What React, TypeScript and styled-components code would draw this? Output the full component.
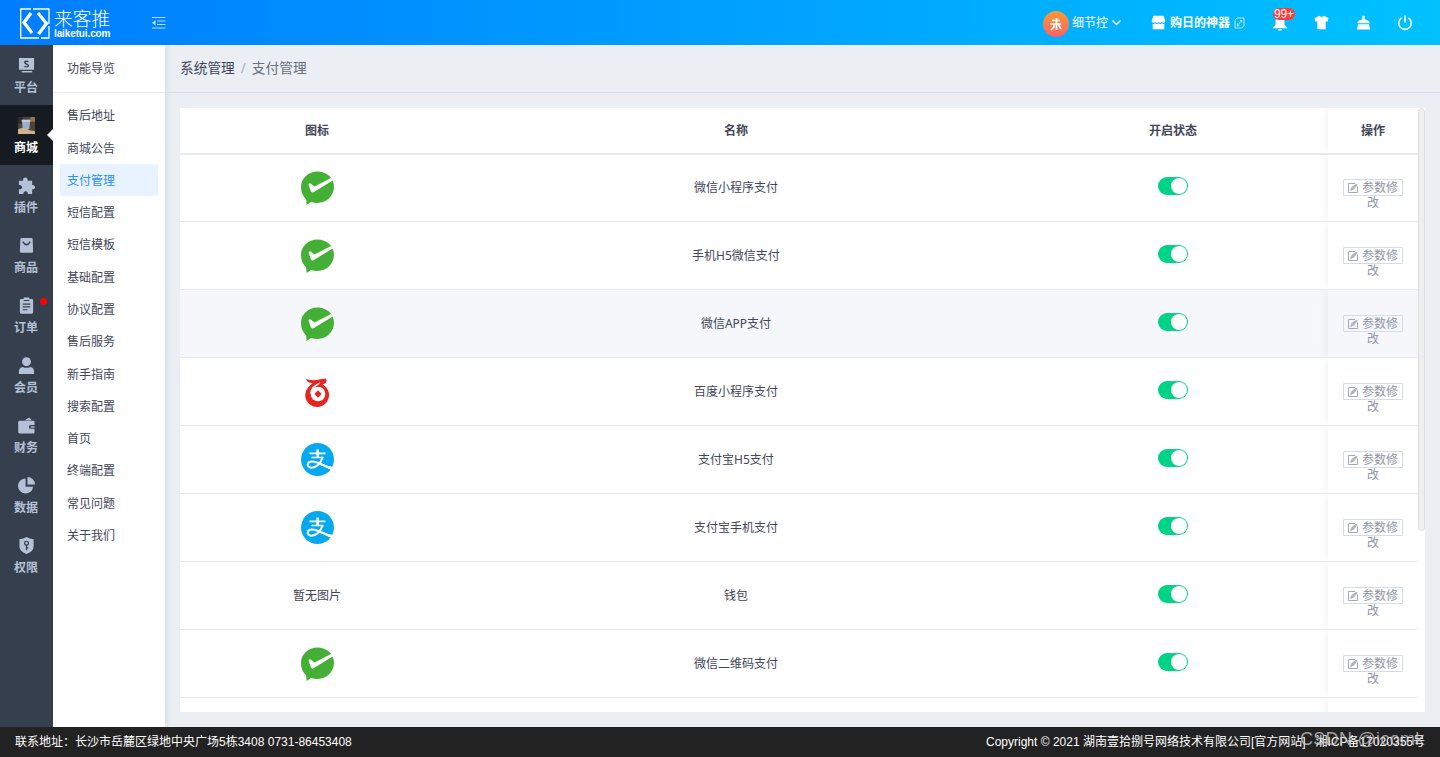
import React from 'react';
import styled, { createGlobalStyle } from 'styled-components';

const Global = createGlobalStyle`
  * { box-sizing: border-box; }
  body {
    margin: 0;
    font: 12px/16px "Noto Sans", "Noto Sans CJK SC", sans-serif;
    color: #414658;
    overflow: hidden;
  }
`;

const Page = styled.div`
  display: flex;
  flex-direction: column;
  height: 757px;
  background: #ebeff4;
`;

const Header = styled.header`
  display: flex;
  align-items: center;
  height: 45px;
  flex: none;
  padding: 0 27px 0 20px;
  color: #fff;
  background: linear-gradient(90deg, #007dff, #00c2ff);
`;
const Logo = styled.div`
  display: flex;
  gap: 4px;
  width: 132px;
  height: 31px;
  margin-top: 2px;
`;
const LogoText = styled.div`
  display: flex;
  flex-direction: column;
`;
const LogoName = styled.span`
  font-family: "Noto Sans CJK SC", sans-serif;
  font-size: 18.8px;
  font-weight: 300;
  line-height: 20px;
  height: 21px;
  white-space: nowrap;
`;
const LogoSite = styled.span`
  font: bold 10px/10px "Liberation Sans", sans-serif;
  letter-spacing: -0.12px;
`;
const Spacer = styled.div`flex: 1;`;
const User = styled.div`
  display: flex;
  align-items: center;
  gap: 3px;
  width: 108px;
`;
const Avatar = styled.span`
  display: flex;
  align-items: center;
  justify-content: center;
  width: 26px;
  height: 26px;
  margin-top: 3px;
  border-radius: 50%;
  background: linear-gradient(#f99c35, #fa6065);
`;
const Shop = styled.div`
  display: flex;
  align-items: center;
  gap: 4px;
  width: 121px;
  font-weight: bold;
`;
const Tools = styled.div`
  display: flex;
  width: 141px;
  justify-content: space-between;
`;
const Bell = styled.span`
  position: relative;
  display: flex;
`;
const Count = styled.span`
  position: absolute;
  left: 1px;
  top: -7px;
  width: 22px;
  height: 12px;
  border-radius: 6px;
  background: #ff3b3b;
  font: 12px/12px "Liberation Sans", sans-serif;
  text-align: center;
  letter-spacing: -0.2px;
`;

const Main = styled.main`
  display: flex;
  flex: 1;
  min-height: 0;
`;
const Rail = styled.nav`
  width: 53px;
  background: #363f4e;
`;
const RailItem = styled.div<{ $active?: boolean }>`
  position: relative;
  display: flex;
  flex-direction: column;
  align-items: center;
  height: 60px;
  padding: 12px 1px 0 0;
  gap: 6px;
  font-weight: bold;
  color: ${(p) => (p.$active ? '#fff' : '#b5c1d6')};
  background: ${(p) => (p.$active ? '#161b22' : 'transparent')};
`;
const Arrow = styled.i`
  position: absolute;
  right: 0;
  top: 24px;
  border: 6px solid transparent;
  border-left: 0;
  border-right-color: #fff;
`;
const Dot = styled.i`
  position: absolute;
  left: 40px;
  top: 13px;
  width: 7px;
  height: 7px;
  border-radius: 50%;
  background: #f00;
`;

const SubMenu = styled.nav`
  width: 112px;
  background: #fff;
  box-shadow: 2px 0 5px rgba(60, 80, 100, 0.1);
`;
const SubTitle = styled.div`
  height: 48px;
  padding: 16px 14px;
  border-bottom: 1px solid #e9ebee;
  margin-bottom: 6.4px;
`;
const SubItem = styled.div<{ $active?: boolean }>`
  height: 32.28px;
  line-height: 33px;
  margin: 0 7px;
  padding-left: 7px;
  border-radius: 2px;
  color: ${(p) => (p.$active ? '#2890ff' : '#414658')};
  background: ${(p) => (p.$active ? '#e9f3ff' : 'transparent')};
`;

const Content = styled.section`
  flex: 1;
  min-width: 0;
`;
const Crumbs = styled.div`
  display: flex;
  gap: 6px;
  height: 48px;
  padding: 14px 15px;
  font-size: 13.7px;
  line-height: 17px;
  border-bottom: 1px solid #d5dbe8;
`;
const Slash = styled.span`color: #a6aab5;`;
const Current = styled.span`color: #6a6f7c;`;

const Panel = styled.div`
  display: flex;
  width: 1245px;
  height: 604px;
  margin: 15px;
  overflow: hidden;
  background: #fff;
`;
const Table = styled.div`
  width: 1238px;
`;
const Row = styled.div<{ $head?: boolean; $hover?: boolean }>`
  display: grid;
  grid-template-columns: 274px 564px 310px 90px;
  height: ${(p) => (p.$head ? 47 : 68)}px;
  margin-bottom: ${(p) => (p.$head ? -1 : 0)}px;
  border-bottom: ${(p) => (p.$head ? 2 : 1)}px solid #e7e9ec;
  font-weight: ${(p) => (p.$head ? 'bold' : 'normal')};
  background: ${(p) => (p.$hover ? '#f5f7fa' : 'transparent')};
`;
const Cell = styled.div`
  display: flex;
  align-items: center;
  justify-content: center;
`;
const IconCell = styled(Cell)`
  svg { margin-left: 1px; }
`;
const ActionCell = styled(Cell)`
  box-shadow: 0 0 10px rgba(0, 0, 0, 0.08);
  clip-path: inset(0 0 0 -10px);
`;
const Toggle = styled.span`
  width: 30px;
  height: 18px;
  margin-top: -3px;
  padding: 1px;
  border-radius: 9px;
  background: #00d287;
  &::after {
    content: '';
    display: block;
    width: 16px;
    height: 16px;
    margin-left: 12px;
    border-radius: 50%;
    background: #fff;
  }
`;
const EditButton = styled.span`
  width: 60px;
  height: 17px;
  border: 1px solid #d5dbe8;
  border-radius: 1px;
  color: #8f95a5;
  line-height: 15px;
  text-align: center;
  svg { display: inline-block; margin-right: 4px; vertical-align: -1px; }
`;
const ScrollBar = styled.div`
  width: 7px;
  height: 423px;
  border: 1px solid #dedede;
  border-radius: 4px;
  background: #efefef;
`;

const Footer = styled.footer`
  position: relative;
  display: flex;
  justify-content: space-between;
  height: 30px;
  flex: none;
  padding: 0 15px;
  background: #222;
  color: #fff;
  font: 12px/30px "Liberation Sans", "Noto Sans CJK SC", sans-serif;
`;
const Rights = styled.div`
  display: flex;
  gap: 10px;
`;
const Mark = styled.span`
  position: absolute;
  left: 1300px;
  top: -2px;
  font-size: 18px;
  line-height: 28px;
  letter-spacing: 0.3px;
  color: rgba(205, 205, 205, 0.75);
`;

const Icon = ({ size = 18, children }: { size?: number; children: React.ReactNode }) => (
  <svg width={size} height={size} viewBox="0 0 18 18" fill="currentColor">{children}</svg>
);

const cut = '#363f4e';
const rail = [
  { label: '平台', icon: <><path d="M1 1h16v12.500H1zM4 14.800h11v1.500H4z" /><path d="M11 5C9 4 7 4.500 7.200 6S11 7.500 11 9 8.500 11 6.800 9.800" fill="none" stroke={cut} strokeWidth="1.5" /></> },
  { label: '商城', active: true, icon: <><path fill="#514235" d="M0 0h18v18H0z" /><path fill="#2e2b2b" d="M0 0h5v7H0z" /><path fill="#997344" d="M13 0h5v5h-5z" /><path fill="#9aafc9" d="M4 3h9l-1 10H5z" /><path fill="#c2cede" d="M4 3h9v2H4z" /><path fill="#cbb38e" d="M0 13q7-3 12 1l6 1v3H0z" /></> },
  { label: '插件', icon: <path d="M1 4h4.500C4.500-.5 11-.5 10.200 4H15v4.500c4-.5 4 5 0 4.500V18h-4.700c1-4-5.500-4-4.500 0H1v-5c4.500.7 4.500-5.200 0-4.500z" /> },
  { label: '商品', icon: <><path d="M4 1h10q1.500 0 1.500 1.500L16 15q0 1.800-1.500 1.800h-11Q2 16.800 2 15l.5-12.500Q2.500 1 4 1z" /><path d="M5 5q4 6.500 8 0" fill="none" stroke={cut} strokeWidth="1.5" /></> },
  { label: '订单', dot: true, icon: <><path d="M3.500 2H6V.5h6V2h2.500Q16 2 16 3.500V16q0 1.800-1.500 1.800h-11Q2 17.800 2 16V3.500Q2 2 3.500 2z" /><path d="M6 3.700h6M5 7.500h8M5 10.500h8M5 13.500h5" fill="none" stroke={cut} strokeWidth="1.2" /></> },
  { label: '会员', icon: <><circle cx="9" cy="5" r="4.700" /><path d="M1 18v-3q0-3.500 4-4.500 4 2 8 0 4 1 4 4.500v3z" /></> },
  { label: '财务', icon: <><path d="M7 3.500l5-3 2.500 3zM2 4h14.500q1 0 1 1V8.500h-4q-2 0-2 2t2 2h4v3.500q0 1.500-1 1.500H2q-1.800 0-1.800-1.500V5.500Q.2 4 2 4z" /><path d="M13.500 9.800h4v1.500h-4z" /></> },
  { label: '数据', icon: <path d="M8 1.500v8.800h8a8 8 0 1 1-8-8.800zM10 0a8 8 0 0 1 8 8h-8z" /> },
  { label: '权限', icon: <><path d="M9 0q3 2 7.500 2.500V10q0 5-7.500 8-7.500-3-7.500-8V2.500Q6 2 9 0z" /><g fill="none" stroke={cut} strokeWidth="1.300"><circle cx="9" cy="6.500" r="2" /><path d="M9 8.500V14M9 11.500h2" /></g></> },
];

const submenu = ['售后地址', '商城公告', '支付管理', '短信配置', '短信模板', '基础配置', '协议配置', '售后服务', '新手指南', '搜索配置', '首页', '终端配置', '常见问题', '关于我们'];

const WeChat = () => (
  <svg width="33" height="34" viewBox="0.5 0 33 34">
    <path fill="#43b035" d="M17 .5C26 .5 33.500 7 33.500 15.800S26 32 17 32q-3.500 0-6.500-1L6 34l-.3-5.500Q.5 23.500.5 16C.5 7 8 .5 17 .5z" />
    <path fill="#fff" d="M8 13.500q.8-2 2.500-.7l3.500 2.700L30.500 7l2 2.200L13 21.200q-1.500.8-2.500-.8z" />
  </svg>
);
const Baidu = () => (
  <svg width="33" height="34" viewBox="0.5 -0.5 33 34">
    <path fill="#e52521" d="M5.500 3.500q7.500 2 12 .8t8-1l.7 1.500Q26 8 22 9A11.900 11.900 0 1 1 7.500 12L12 7.500Q7 8 5.500 3.500z" />
    <path d="M9.500 18Q10.500 10 20 6.800l-2 2.500Q12 12 12 18z" fill="#fff" />
    <circle cx="17.500" cy="18.500" r="7.300" fill="#fff" />
    <path d="M17.500 14.800l3.700 3.700-3.700 3.700-3.700-3.700z" fill="#e52521" />
  </svg>
);
const Alipay = () => (
  <svg width="33" height="33" viewBox="0.5 0.5 33 33">
    <circle cx="17" cy="17" r="16.500" fill="#06a9ef" />
    <g fill="none" stroke="#fff">
      <path d="M9 10.800h16M11 15h12" strokeWidth="1.700" />
      <path d="M17.200 7v8" strokeWidth="2.500" />
      <path d="M22 15c-2 7-7 10.500-11.500 10.200-5-.7-4-6.200 1-6.200 6 0 11 4.500 20 7" strokeWidth="2" />
    </g>
    <path d="M20 20.500q6 3 13 4l-2 3L19 22z" fill="#fff" />
  </svg>
);

const rows = [
  { icon: <WeChat />, name: '微信小程序支付' },
  { icon: <WeChat />, name: '手机H5微信支付' },
  { icon: <WeChat />, name: '微信APP支付', hover: true },
  { icon: <Baidu />, name: '百度小程序支付' },
  { icon: <Alipay />, name: '支付宝H5支付' },
  { icon: <Alipay />, name: '支付宝手机支付' },
  { icon: '暂无图片', name: '钱包' },
  { icon: <WeChat />, name: '微信二维码支付' },
];

export default function App() {
  return (
    <Page>
      <Global />
      <Header>
        <Logo>
          <svg width="30" height="31" viewBox="0 0 30 31" fill="none" stroke="#fff">
            <path d="M11 1H.7v29H19M13 1h16v15M29 18v12h-8" strokeWidth="1.300" />
            <path d="M11 5L4 14.500 12 25M18 5l8.500 10.500L18.500 26" strokeWidth="3.200" />
          </svg>
          <LogoText>
            <LogoName>来客推</LogoName>
            <LogoSite>laiketui.com</LogoSite>
          </LogoText>
        </Logo>
        <svg width="14" height="14" viewBox="0 0 14 14" fill="none" stroke="#b5d9ff" strokeWidth="1.200">
          <path d="M0 1.500h13.500M5 5h8.500M5 8.500h8.500M0 12h13.500" />
          <path d="M0 6.800l3.500-2.600v5.200z" fill="#c6e2ff" stroke="none" />
        </svg>
        <Spacer />
        <User>
          <Avatar>
            <svg width="14" height="14" viewBox="0 0 14 14" fill="none" stroke="#fff" strokeWidth="1.700">
              <path d="M3 3.500h8M1 7h11M7.500 1v12M5 7v3l-3 3M9 7l3 5" />
            </svg>
          </Avatar>
          细节控
          <svg width="11" height="8" viewBox="0 0 11 8" fill="none" stroke="#fff" strokeWidth="1.300"><path d="M1.500 1.500l4 4 4-4" /></svg>
        </User>
        <Shop>
          <Icon size={15}><path d="M3 1h12l2 5v2q-2 3-4 0-2 3-4 0-2 3-4 0-2 3-4 0V6zM2 11q2 0 3-1 2 2 4 0 2 2 4 0 1 1 3 1v6H2z" /></Icon>
          购日的神器
          <svg width="11" height="12" viewBox="0 0 11 12" fill="none" stroke="#c8eeff"><path d="M3 1h7v7.500L8 11H1V3.500zM3.500 8.500l4-5M3.300 6.500v2.300h2M6 3.300h1.800v2" strokeWidth=".9" /></svg>
        </Shop>
        <Tools>
          <Bell><Icon size={16}><path d="M9 1q5 0 5 6v4l3 3v1H1v-1l3-3V7q0-6 5-6zM7 16h4v1.500H7z" /></Icon><Count>99+</Count></Bell>
          <Icon size={15}><path d="M6 1q3 2.500 6 0l5.500 3L16 8l-2-.5V17H4V7.500L2 8 .5 4z" /></Icon>
          <Icon size={15}><path d="M7.500 1h3v4.500Q16 6 16.500 10h-15Q2 6 7.500 5.500zM2.500 11h13l1.500 6.500H1z" /></Icon>
          <svg width="16" height="16" viewBox="0 0 16 16" fill="none" stroke="#fff" strokeWidth="1.600"><path d="M8 .5v7M4.500 2.800a6.300 6.300 0 1 0 7 0" /></svg>
        </Tools>
      </Header>
      <Main>
        <Rail>
          {rail.map((r) => (
            <RailItem key={r.label} $active={r.active}>
              <Icon size={17}>{r.icon}</Icon>
              {r.label}
              {r.active && <Arrow />}
              {r.dot && <Dot />}
            </RailItem>
          ))}
        </Rail>
        <SubMenu>
          <SubTitle>功能导览</SubTitle>
          {submenu.map((s) => <SubItem key={s} $active={s === '支付管理'}>{s}</SubItem>)}
        </SubMenu>
        <Content>
          <Crumbs><span>系统管理</span><Slash>/</Slash><Current>支付管理</Current></Crumbs>
          <Panel>
            <Table>
              <Row $head><Cell>图标</Cell><Cell>名称</Cell><Cell>开启状态</Cell><ActionCell>操作</ActionCell></Row>
              {rows.map((r) => (
                <Row key={r.name} $hover={r.hover}>
                  <IconCell>{r.icon}</IconCell>
                  <Cell>{r.name}</Cell>
                  <Cell><Toggle /></Cell>
                  <ActionCell>
                    <EditButton>
                      <svg width="10" height="10" viewBox="0 0 10 10" fill="none" stroke="#a3a7b3"><path d="M7 .5H.5v9h9V3.500" /><path d="M2.500 7.500l1-3L8.500 1 9.300 2 5.500 6.500z" fill="#b4b8c2" strokeWidth=".6" /></svg>
                      参数修改
                    </EditButton>
                  </ActionCell>
                </Row>
              ))}
              <Row><Cell /><Cell /><Cell /><ActionCell /></Row>
            </Table>
            <ScrollBar />
          </Panel>
        </Content>
      </Main>
      <Footer>
        <span>联系地址：长沙市岳麓区绿地中央广场5栋3408 0731-86453408</span>
        <Rights><span>Copyright © 2021 湖南壹拾捌号网络技术有限公司[官方网站]</span><span>湘ICP备17020355号</span></Rights>
        <Mark>CSDN @icomk</Mark>
      </Footer>
    </Page>
  );
}
